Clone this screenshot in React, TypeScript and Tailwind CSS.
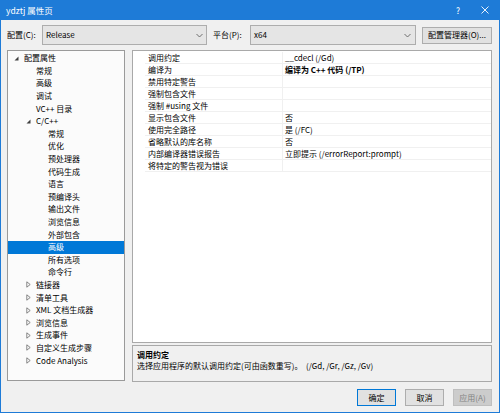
import React from "react";

type Node = { label: string; level: number; kind: "open" | "closed" | "leaf"; selected?: boolean };

const tree: Node[] = [
  { label: "配置属性", level: 0, kind: "open" },
  { label: "常规", level: 1, kind: "leaf" },
  { label: "高级", level: 1, kind: "leaf" },
  { label: "调试", level: 1, kind: "leaf" },
  { label: "VC++ 目录", level: 1, kind: "leaf" },
  { label: "C/C++", level: 1, kind: "open" },
  { label: "常规", level: 2, kind: "leaf" },
  { label: "优化", level: 2, kind: "leaf" },
  { label: "预处理器", level: 2, kind: "leaf" },
  { label: "代码生成", level: 2, kind: "leaf" },
  { label: "语言", level: 2, kind: "leaf" },
  { label: "预编译头", level: 2, kind: "leaf" },
  { label: "输出文件", level: 2, kind: "leaf" },
  { label: "浏览信息", level: 2, kind: "leaf" },
  { label: "外部包含", level: 2, kind: "leaf" },
  { label: "高级", level: 2, kind: "leaf", selected: true },
  { label: "所有选项", level: 2, kind: "leaf" },
  { label: "命令行", level: 2, kind: "leaf" },
  { label: "链接器", level: 1, kind: "closed" },
  { label: "清单工具", level: 1, kind: "closed" },
  { label: "XML 文档生成器", level: 1, kind: "closed" },
  { label: "浏览信息", level: 1, kind: "closed" },
  { label: "生成事件", level: 1, kind: "closed" },
  { label: "自定义生成步骤", level: 1, kind: "closed" },
  { label: "Code Analysis", level: 1, kind: "closed" },
];

const props: { name: string; value: string; bold?: boolean }[] = [
  { name: "调用约定", value: "__cdecl (/Gd)" },
  { name: "编译为", value: "编译为 C++ 代码 (/TP)", bold: true },
  { name: "禁用特定警告", value: "" },
  { name: "强制包含文件", value: "" },
  { name: "强制 #using 文件", value: "" },
  { name: "显示包含文件", value: "否" },
  { name: "使用完全路径", value: "是 (/FC)" },
  { name: "省略默认的库名称", value: "否" },
  { name: "内部编译器错误报告", value: "立即提示 (/errorReport:prompt)" },
  { name: "将特定的警告视为错误", value: "" },
];

const padL = ["pl-[6px]", "pl-[18px]", "pl-[30px]"];

function Chevron() {
  return (
    <svg width="7" height="5" viewBox="0 0 7 5" className="shrink-0">
      <path d="M0.5 1 L3.5 4 L6.5 1" fill="none" stroke="#606060" strokeWidth="0.9" />
    </svg>
  );
}

function Glyph({ kind, selected }: { kind: Node["kind"]; selected?: boolean }) {
  if (kind === "open")
    return (
      <svg width="5" height="5" viewBox="0 0 5 5">
        <path d="M4.5 0.5 L4.5 4.5 L0.5 4.5 Z" fill={selected ? "#fff" : "#404040"} />
      </svg>
    );
  if (kind === "closed")
    return (
      <svg width="5" height="7" viewBox="0 0 5 7">
        <path d="M0.8 0.8 L4.2 3.5 L0.8 6.2 Z" fill="none" stroke="#6a6a6a" strokeWidth="0.8" />
      </svg>
    );
  return null;
}

export default function App() {
  return (
    <div
      className="w-[500px] h-[413px] flex flex-col bg-[#f0f0f0] border-x border-b border-[#1e7bd7] text-[8px] text-black overflow-hidden"
      style={{ fontFamily: '"Noto Sans CJK SC", "Noto Sans", sans-serif' }}
    >
      {/* title bar */}
      <div className="h-[20px] shrink-0 bg-[#1e7bd7] flex items-center text-white pl-[5px] pr-[10px]">
        <span className="text-[8.5px]">ydztj 属性页</span>
        <div className="ml-auto flex items-center gap-[21px]">
          <span className="text-[8.5px]">?</span>
          <svg width="8" height="8" viewBox="0 0 8 8">
            <path d="M0.5 0.5 L7.5 7.5 M7.5 0.5 L0.5 7.5" stroke="#fff" strokeWidth="0.9" />
          </svg>
        </div>
      </div>

      <div className="flex flex-col pl-[6px] pr-[7px]">
        {/* config row */}
        <div className="mt-[5px] h-[20px] flex items-center">
          <span className="w-[35px] shrink-0">配置(C):</span>
          <div className="w-[165px] h-[20px] shrink-0 bg-[#e5e5e5] border border-[#adadad] flex items-center pl-[3px] pr-[3px]">
            <span>Release</span>
            <span className="ml-auto"><Chevron /></span>
          </div>
          <span className="ml-[6px] w-[37px] shrink-0">平台(P):</span>
          <div className="w-[166px] h-[20px] shrink-0 bg-[#e5e5e5] border border-[#adadad] flex items-center pl-[3px] pr-[4px]">
            <span>x64</span>
            <span className="ml-auto"><Chevron /></span>
          </div>
          <div className="ml-[6px] w-[70px] h-[17px] shrink-0 bg-[#e1e1e1] border border-[#adadad] flex items-center justify-center">
            配置管理器(O)...
          </div>
        </div>

        {/* main */}
        <div className="mt-[5px] h-[332px] flex gap-[7px]">
          {/* tree */}
          <div className="w-[118px] h-[331px] shrink-0 bg-[#fbfbfb] border border-[#9a9a9a] pt-[1px]">
            {tree.map((n, i) => (
              <div
                key={i}
                className={`h-[12.6px] flex items-center ${padL[n.level]} ${n.selected ? "bg-[#0078d7] text-white" : ""}`}
              >
                <span className="w-[10px] shrink-0 flex items-center">
                  <Glyph kind={n.kind} selected={n.selected} />
                </span>
                <span className="whitespace-nowrap">{n.label}</span>
              </div>
            ))}
          </div>

          {/* right column */}
          <div className="w-[360px] shrink-0 flex flex-col gap-[2px]">
            <div className="h-[293px] bg-white border border-[#a9a9a9] pt-[1px]">
              {props.map((p, i) => (
                <div key={i} className="h-[12px] flex">
                  <div className="w-[12px] shrink-0" />
                  <div className="w-[138px] shrink-0 border-b border-r border-[#f0f0f0] pl-[3px] flex items-center whitespace-nowrap">
                    {p.name}
                  </div>
                  <div className={`flex-1 border-b border-[#f0f0f0] pl-[2px] flex items-center whitespace-nowrap ${p.bold ? "font-bold" : ""}`}>
                    {p.value}
                  </div>
                </div>
              ))}
            </div>
            <div className="h-[37px] bg-[#f0f0f0] border border-[#a9a9a9] pl-[4px] pt-[3px] flex flex-col">
              <div className="h-[11px] flex items-center font-bold">调用约定</div>
              <div className="h-[11px] flex items-center whitespace-nowrap">
                <span className="inline-block w-[169px]">选择应用程序的默认调用约定(可由函数重写)。</span>
                <span>(/Gd, /Gr, /Gz, /Gv)</span>
              </div>
            </div>
          </div>
        </div>

        {/* buttons */}
        <div className="mt-[7px] h-[17px] flex justify-end gap-[9px]">
          <div className="w-[39px] h-[17px] bg-[#e1e1e1] border border-[#0078d7] flex items-center justify-center">确定</div>
          <div className="w-[39px] h-[17px] bg-[#e1e1e1] border border-[#adadad] flex items-center justify-center">取消</div>
          <div className="w-[39px] h-[17px] bg-[#cccccc] border border-[#bfbfbf] text-[#838383] flex items-center justify-center">应用(A)</div>
        </div>
      </div>
    </div>
  );
}
